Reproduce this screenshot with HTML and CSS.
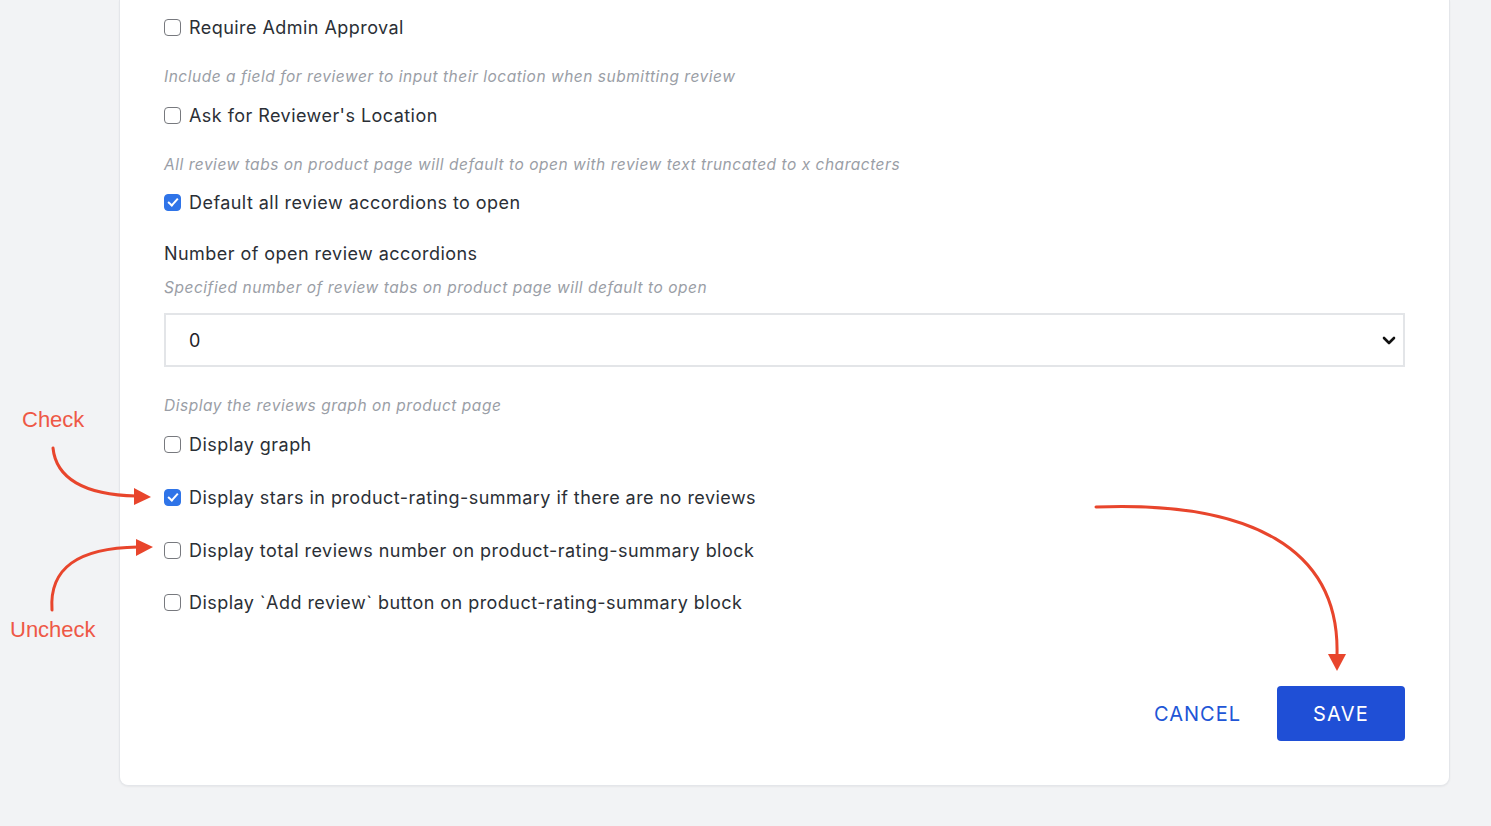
FILE: index.html
```html
<!DOCTYPE html>
<html lang="en">
<head>
<meta charset="utf-8">
<title>Review settings</title>
<link rel="stylesheet" href="styles.css">
</head>
<body>
<div class="page">
  <div class="card">
    <label class="check-row"><input type="checkbox" class="cb"><span>Require Admin Approval</span></label>

    <p class="hint gap-27">Include a field for reviewer to input their location when submitting review</p>
    <label class="check-row gap-17"><input type="checkbox" class="cb"><span>Ask for Reviewer's Location</span></label>

    <p class="hint gap-27">All review tabs on product page will default to open with review text truncated to x characters</p>
    <label class="check-row gap-16"><input type="checkbox" class="cb" checked><span>Default all review accordions to open</span></label>

    <div class="field-label gap-27">Number of open review accordions</div>
    <p class="hint gap-12">Specified number of review tabs on product page will default to open</p>
    <div class="select gap-15">
      <span>0</span>
      <svg class="chev" width="14" height="9" viewBox="0 0 14 9"><path d="M2 2 L7 7 L12 2" fill="none" stroke="#111" stroke-width="2.6" stroke-linecap="round" stroke-linejoin="round"/></svg>
    </div>

    <p class="hint gap-29">Display the reviews graph on product page</p>
    <label class="check-row gap-17"><input type="checkbox" class="cb"><span>Display graph</span></label>
    <label class="check-row gap-29"><input type="checkbox" class="cb" checked><span>Display stars in product-rating-summary if there are no reviews</span></label>
    <label class="check-row gap-29"><input type="checkbox" class="cb"><span>Display total reviews number on product-rating-summary block</span></label>
    <label class="check-row gap-28"><input type="checkbox" class="cb"><span>Display `Add review` button on product-rating-summary block</span></label>

    <div class="actions">
      <button class="btn-cancel">CANCEL</button>
      <button class="btn-save">SAVE</button>
    </div>
  </div>

  <span class="note note-check">Check</span>
  <span class="note note-uncheck">Uncheck</span>
  <svg class="arrows" width="1491" height="826" viewBox="0 0 1491 826">
    <g fill="none" stroke="#e8452c" stroke-width="3" stroke-linecap="round">
      <path d="M53 448 C56 478 84 495 136 496"/>
      <path d="M52 610 C49 568 78 548 138 547"/>
      <path d="M1096 507 C1250 501 1340 548 1337 655"/>
    </g>
    <g fill="#e8452c">
      <path d="M134 488 L151 497 L134 505 Z"/>
      <path d="M136 539 L153 547 L136 556 Z"/>
      <path d="M1328 654 L1346 654 L1337 671 Z"/>
    </g>
  </svg>
</div>
</body>
</html>
```

FILE: styles.css
```css
* { box-sizing: border-box; }
html, body { margin: 0; padding: 0; }
body {
  background: #f2f3f5;
  font-family: Inter, "Liberation Sans", Arial, sans-serif;
  color: #2b2f36;
}
.page {
  position: relative;
  width: 1491px;
  height: 826px;
  padding: 0 41px 40px 119px;
  overflow: hidden;
}
.card {
  width: 1331px;
  background: #fff;
  border: 1px solid #e4e6ea;
  border-top: none;
  border-radius: 0 0 9px 9px;
  box-shadow: 0 1px 2px rgba(0,0,0,0.05);
  padding: 16px 44px 44px 44px;
  display: flex;
  flex-direction: column;
}
.check-row {
  display: flex;
  align-items: center;
  gap: 8px;
  height: 24px;
  font-size: 18px;
  line-height: 24px;
  letter-spacing: 0.45px;
  color: #2b2f36;
}
.cb {
  appearance: none;
  -webkit-appearance: none;
  margin: 0;
  width: 17px;
  height: 17px;
  border: 1.5px solid #77797e;
  border-radius: 4px;
  background: #fff;
  position: relative;
  flex: none;
  top: -1px;
}
.cb:checked {
  background: #2f74e8;
  border-color: #2f74e8;
}
.cb:checked::after {
  content: "";
  position: absolute;
  left: 4.5px;
  top: 1.5px;
  width: 4px;
  height: 8px;
  border: solid #fff;
  border-width: 0 2.2px 2.2px 0;
  transform: rotate(42deg);
}
.hint {
  margin: 0;
  height: 20px;
  font-size: 15.5px;
  line-height: 20px;
  font-style: italic;
  color: #9a9ea6;
  letter-spacing: 0.52px;
}
.field-label {
  height: 24px;
  font-size: 18px;
  line-height: 24px;
  letter-spacing: 0.45px;
  color: #2b2f36;
}
.select {
  height: 54px;
  border: 2px solid #e3e5e8;
  display: flex;
  align-items: center;
  justify-content: space-between;
  padding: 0 7px 0 23px;
  font-size: 18px;
  color: #1f2228;
}
.chev { display: block; }
.gap-12 { margin-top: 12px; }
.gap-15 { margin-top: 15px; }
.gap-16 { margin-top: 16px; }
.gap-17 { margin-top: 17px; }
.gap-27 { margin-top: 27px; }
.gap-28 { margin-top: 28px; }
.gap-29 { margin-top: 29px; }
.actions {
  margin-top: 71px;
  display: flex;
  justify-content: flex-end;
  align-items: center;
  gap: 36px;
}
.btn-cancel {
  background: none;
  border: none;
  padding: 0;
  font-family: inherit;
  font-size: 20px;
  letter-spacing: 1px;
  color: #2155d6;
}
.btn-save {
  width: 128px;
  height: 55px;
  background: #1f4fd6;
  border: none;
  border-radius: 4px;
  color: #fff;
  font-family: inherit;
  font-size: 20px;
  letter-spacing: 1.2px;
}
.note {
  position: absolute;
  font-family: "Liberation Sans", Arial, sans-serif;
  font-size: 22px;
  color: #ee5846;
  line-height: 26px;
}
.note-check { left: 22px; top: 407px; }
.note-uncheck { left: 10px; top: 617px; }
.arrows {
  position: absolute;
  left: 0;
  top: 0;
  pointer-events: none;
}
```
